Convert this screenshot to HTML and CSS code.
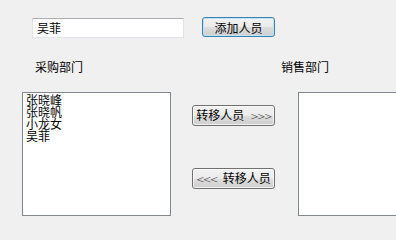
FILE: index.html
```html
<!DOCTYPE html>
<html lang="zh">
<head>
<meta charset="utf-8">
<link rel="stylesheet" href="styles.css">
</head>
<body>
<div class="form">
  <div class="top-row">
    <div class="textbox">吴菲</div>
    <button class="btn btn-default add-btn">添加人员</button>
  </div>
  <div class="labels">
    <span class="label">采购部门</span>
    <span class="label label-right">销售部门</span>
  </div>
  <div class="main">
    <ul class="listbox left-list">
      <li>张晓峰</li>
      <li>张晓帆</li>
      <li>小龙女</li>
      <li>吴菲</li>
    </ul>
    <div class="actions">
      <button class="btn move-btn">转移人员<span class="arrows arrows-after">&gt;&gt;&gt;</span></button>
      <button class="btn move-btn"><span class="arrows arrows-before">&lt;&lt;&lt;</span>转移人员</button>
    </div>
    <ul class="listbox right-list"></ul>
  </div>
</div>
</body>
</html>
```
FILE: styles.css
```css
html, body {
  margin: 0;
  padding: 0;
  background: #f0f0f0;
  overflow: hidden;
  width: 396px;
  height: 227px;
}
.form {
  font-family: "Noto Sans CJK SC", "Noto Sans", sans-serif;
  font-size: 12px;
  color: #000;
}
.top-row {
  display: flex;
  align-items: flex-start;
  padding: 17px 0 0 32px;
  height: 22px;
}
.textbox {
  box-sizing: border-box;
  width: 152px;
  height: 20px;
  margin-top: 1px;
  background: #fff;
  border: 1px solid #e2e3ea;
  border-top-color: #abadb3;
  padding: 0 0 0 4px;
  line-height: 18px;
}
.btn {
  box-sizing: border-box;
  font-family: "Noto Sans CJK SC", "Noto Sans", sans-serif;
  font-size: 12px;
  color: #000;
  border: 1px solid #707070;
  border-radius: 3px;
  background: linear-gradient(#f2f2f2 0%, #ebebeb 50%, #dddddd 51%, #cfcfcf 100%);
  box-shadow: inset 0 0 0 1px rgba(255,255,255,0.7);
  padding: 0;
  margin: 0;
  line-height: 17px;
  text-align: center;
  flex-shrink: 0;
}
.btn-default {
  border-color: #3c7fb1;
  box-shadow: inset 0 0 0 1px #bfe3f7;
}
.add-btn {
  width: 73px;
  height: 20px;
  margin-left: 18px;
}
.labels {
  display: flex;
  padding: 21px 0 0 35px;
  height: 53px;
  box-sizing: border-box;
  line-height: 14px;
}
.label-right {
  margin-left: 198px;
}
.main {
  display: flex;
  align-items: flex-start;
  padding-left: 22px;
}
.listbox {
  box-sizing: border-box;
  margin: 0;
  padding: 1px 0 0 3px;
  list-style: none;
  background: #fff;
  border: 1px solid #828790;
  height: 124px;
  line-height: 12px;
  flex-shrink: 0;
}
.left-list {
  width: 149px;
}
.right-list {
  width: 98px;
  margin-left: 23px;
  border-right: none;
}
.actions {
  display: flex;
  flex-direction: column;
  gap: 42px;
  margin: 13px 0 0 21px;
  flex-shrink: 0;
}
.move-btn {
  width: 83px;
  height: 21px;
  line-height: 18px;
}
.arrows {
  display: inline-block;
  font-family: "DejaVu Sans", sans-serif;
  font-size: 10px;
  font-weight: 200;
  letter-spacing: -1.5px;
  color: #222;
}
.arrows-after {
  margin-left: 6px;
}
.arrows-before {
  margin-right: 6px;
}
```
